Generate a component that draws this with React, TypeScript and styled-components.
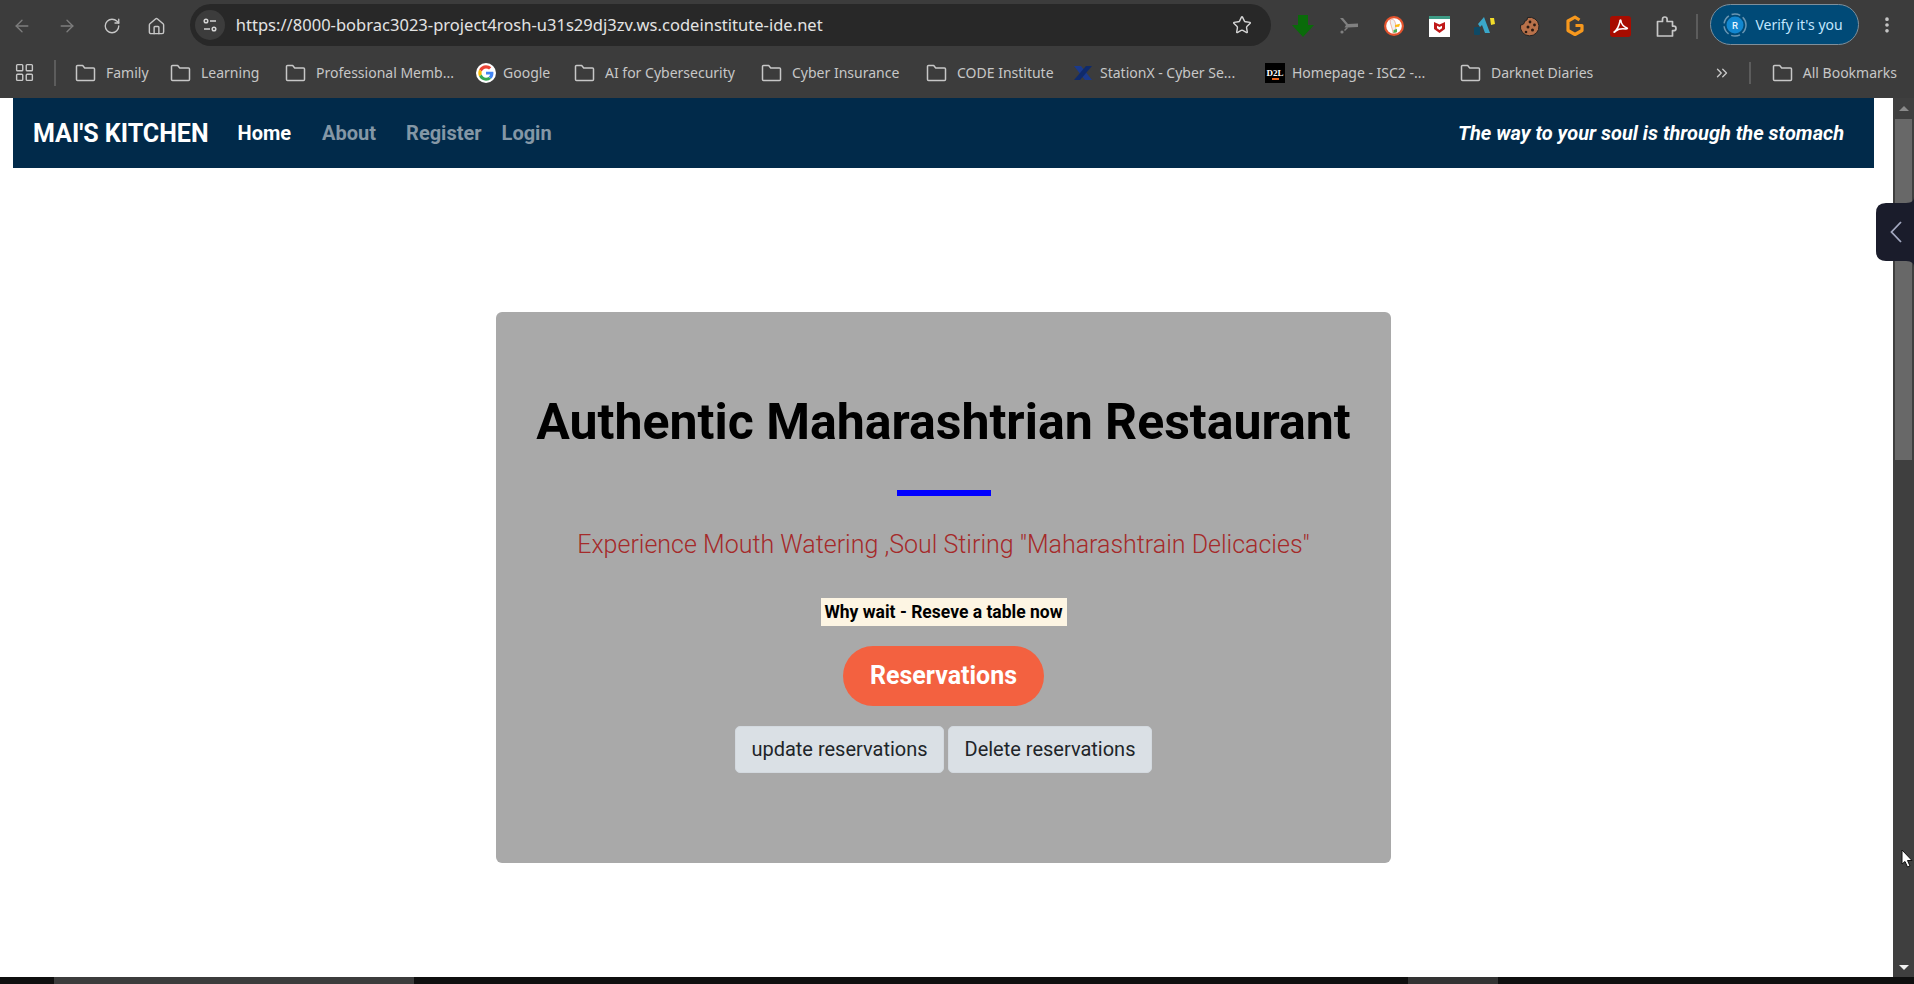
import React from "react";
import styled, { createGlobalStyle } from "styled-components";
import { ArrowLeft, ArrowRight, RotateCw, Home, Star, MoreVertical, LayoutGrid, ChevronsRight } from "lucide-react";

const Global = createGlobalStyle`
  html, body { margin: 0; padding: 0; height: 100%; overflow: hidden; background: #fff; }
  #root { height: 100%; }
  * { box-sizing: border-box; }
`;

const Screen = styled.div`
  position: relative;
  width: 1914px;
  height: 984px;
  display: flex;
  flex-direction: column;
  overflow: hidden;
  font-family: Roboto, "Liberation Sans", sans-serif;
`;

const Toolbar = styled.div`
  height: 49px;
  flex: none;
  background: #3c3c3c;
  display: flex;
  align-items: center;
  padding-top: 3px;
`;

const NavIcon = styled.div<{ $dim?: boolean }>`
  width: 44.7px;
  flex: none;
  display: flex;
  justify-content: center;
  color: ${(p) => (p.$dim ? "#7d7d7d" : "#c7c7c7")};
`;

const UrlPill = styled.div`
  width: 1081px;
  height: 42px;
  margin-left: 11px;
  margin-top: -3px;
  border-radius: 21px;
  background: #282828;
  display: flex;
  align-items: center;
  padding: 0 19px 0 5px;
  flex: none;
`;

const TuneChip = styled.div`
  width: 30px;
  height: 30px;
  border-radius: 50%;
  background: #3c3c3c;
  display: flex;
  align-items: center;
  justify-content: center;
  flex: none;
`;

const UrlText = styled.div`
  margin-left: 11px;
  flex: 1;
  font-family: "Noto Sans", sans-serif;
  font-size: 16.5px;
  letter-spacing: 0.02px;
  color: #e3e3e3;
  white-space: nowrap;
`;

const ExtRow = styled.div`
  display: flex;
  margin-left: 10px;
  flex: none;
`;

const ExtSlot = styled.div`
  width: 45.3px;
  height: 28px;
  display: flex;
  align-items: center;
  justify-content: center;
  color: #c7c7c7;
`;

const Divider = styled.div<{ $h: number; $ml: number; $mr?: number }>`
  width: 2px;
  height: ${(p) => p.$h}px;
  margin-left: ${(p) => p.$ml}px;
  margin-right: ${(p) => p.$mr ?? 0}px;
  background: #5c5c5c;
  flex: none;
`;

const VerifyPill = styled.div`
  width: 149px;
  height: 41px;
  margin-left: 12px;
  margin-top: -3px;
  border-radius: 21px;
  background: #004a77;
  border: 1px solid #7e8f9b;
  display: flex;
  align-items: center;
  padding-left: 12px;
  gap: 8px;
  flex: none;
  color: #c2e7ff;
  font-family: "Noto Sans", sans-serif;
  font-size: 14px;
  letter-spacing: 0;
  white-space: nowrap;
`;

const Dots = styled.div`
  width: 57px;
  display: flex;
  justify-content: center;
  color: #c7c7c7;
  margin-top: -2px;
`;

const BookmarkBar = styled.div`
  height: 49px;
  flex: none;
  background: #3c3c3c;
  display: flex;
  align-items: center;
  padding: 0 17px 2px 14px;
`;

const AppsIcon = styled.div`
  width: 22px;
  display: flex;
  color: #c7c7c7;
  flex: none;
`;

const BookmarkItem = styled.div<{ $w?: number; $gap?: number }>`
  width: ${(p) => (p.$w ? `${p.$w}px` : "auto")};
  flex: none;
  display: flex;
  align-items: center;
  gap: ${(p) => p.$gap ?? 10}px;
  color: #c7c7c7;
  font-family: "Noto Sans", sans-serif;
  font-size: 14px;
  white-space: nowrap;
`;

const BookmarkList = styled.div`
  display: flex;
  margin-left: 19px;
`;

const Overflow = styled.div`
  margin-left: auto;
  color: #c7c7c7;
  display: flex;
  margin-right: 18px;
`;

const Middle = styled.div`
  flex: 1;
  display: flex;
  min-height: 0;
`;

const Page = styled.div`
  flex: 1;
  background: #fff;
  padding: 0 19px 0 13px;
  display: flex;
  flex-direction: column;
`;

const Navbar = styled.nav`
  height: 70px;
  flex: none;
  background: #012a4a;
  display: flex;
  align-items: center;
  padding: 0 30px 0 20px;
`;

const Brand = styled.div`
  font-size: 25px;
  font-weight: 700;
  color: #fff;
  margin-right: 29px;
  white-space: nowrap;
`;

const NavLink = styled.div<{ $active?: boolean; $mr: number }>`
  font-size: 20px;
  font-weight: 700;
  color: ${(p) => (p.$active ? "#fff" : "#8497a6")};
  margin-right: ${(p) => p.$mr}px;
`;

const Tagline = styled.div`
  margin-left: auto;
  font-size: 20px;
  font-weight: 700;
  font-style: italic;
  color: #fff;
`;

const Card = styled.section`
  width: 895px;
  height: 551px;
  margin: 144px auto 0;
  background: #a9a9a9;
  border-radius: 6px;
  display: flex;
  flex-direction: column;
  align-items: center;
  padding-top: 82px;
`;

const Title = styled.h1`
  margin: 0;
  font-size: 50px;
  line-height: 56px;
  font-weight: 700;
  color: #000;
  white-space: nowrap;
`;

const Rule = styled.div`
  width: 94px;
  height: 6px;
  background: #0000ff;
  margin-top: 40px;
`;

const Lead = styled.p`
  margin: 31px 0 0;
  font-size: 25px;
  line-height: 36px;
  font-weight: 300;
  color: #a52a2a;
  white-space: nowrap;
`;

const Prompt = styled.div`
  margin-top: 35px;
  width: 246px;
  height: 28px;
  text-align: center;
  background: #fdf5e3;
  font-size: 17.5px;
  line-height: 28px;
  font-weight: 700;
  color: #000;
  white-space: nowrap;
`;

const PrimaryButton = styled.button`
  margin-top: 20px;
  width: 201px;
  height: 60px;
  border: none;
  border-radius: 30px;
  background: #f36140;
  color: #fff;
  font-family: inherit;
  font-size: 25px;
  font-weight: 700;
  padding: 0 0 2px;
`;

const ButtonRow = styled.div`
  margin-top: 20px;
  display: flex;
  gap: 4px;
`;

const LightButton = styled.button<{ $w: number }>`
  width: ${(p) => p.$w}px;
  height: 47px;
  border: 1px solid #d3d9df;
  border-radius: 5px;
  background: #dae0e5;
  color: #212529;
  font-family: inherit;
  font-size: 20px;
  font-weight: 400;
  padding: 0 0 2px;
  white-space: nowrap;
`;

const Scrollbar = styled.div`
  width: 21px;
  flex: none;
  background: #3f3f3f;
  display: flex;
  flex-direction: column;
  align-items: center;
  padding-top: 8px;
`;

const ArrowUp = styled.div`
  width: 0;
  height: 0;
  border-left: 5px solid transparent;
  border-right: 5px solid transparent;
  border-bottom: 5px solid #8a8a8a;
`;

const ArrowDown = styled.div`
  width: 0;
  height: 0;
  margin-top: auto;
  margin-bottom: 7px;
  border-left: 5px solid transparent;
  border-right: 5px solid transparent;
  border-top: 5px solid #f0f0f0;
`;

const Thumb = styled.div`
  width: 17px;
  height: 341px;
  margin-top: 8px;
  background: #686868;
`;

const BottomBar = styled.div`
  height: 7px;
  flex: none;
  background: #0f0f0f;
  display: flex;
`;

const BottomThumb = styled.div<{ $w: number; $ml: number; $c: string }>`
  width: ${(p) => p.$w}px;
  margin-left: ${(p) => p.$ml}px;
  background: ${(p) => p.$c};
`;

const PanelTab = styled.div`
  position: absolute;
  left: 1876px;
  top: 197px;
  width: 38px;
  height: 70px;
`;

const Cursor = styled.div`
  position: absolute;
  left: 1901px;
  top: 849px;
  width: 12px;
  height: 20px;
`;

const FolderIcon = () => (
  <svg width="21" height="18" viewBox="0 0 21 18" fill="none" stroke="currentColor" strokeWidth="1.500" strokeLinejoin="round">
    <path d="M1.500 2.500a1 1 0 0 1 1-1h5.200l2 2.500h8.800a1 1 0 0 1 1 1v10.500a1 1 0 0 1-1 1h-16a1 1 0 0 1-1-1z" />
  </svg>
);

const GoogleIcon = () => (
  <svg width="20" height="20" viewBox="0 0 48 48">
    <circle cx="24" cy="24" r="24" fill="#fff" />
    <path fill="#EA4335" d="M24 13c3 0 5.400 1 7.300 2.800l5.400-5.400C33.400 7.300 29.100 5.500 24 5.500c-7.300 0-13.500 4.100-16.500 10.200l6.300 4.900C15.200 16.200 19.200 13 24 13z" />
    <path fill="#4285F4" d="M41.800 24.400c0-1.300-.1-2.500-.3-3.700H24v7h10c-.4 2.300-1.700 4.200-3.700 5.500l6 4.600c3.500-3.200 5.500-8 5.500-13.400z" />
    <path fill="#FBBC05" d="M13.800 27.400c-.3-1-.5-2.200-.5-3.400s.2-2.300.5-3.400l-6.300-4.900C6.200 18.200 5.500 21 5.500 24s.7 5.800 2 8.300l6.300-4.900z" />
    <path fill="#34A853" d="M24 42.500c5 0 9.200-1.600 12.300-4.500l-6-4.600c-1.700 1.100-3.800 1.800-6.300 1.800-4.800 0-8.800-3.200-10.200-7.600l-6.300 4.900c3 6 9.200 10 16.500 10z" />
  </svg>
);

const StationXIcon = () => (
  <svg width="20" height="20" viewBox="0 0 20 20">
    <path d="M1 3 L8 3 L19 17 L12 17 Z" fill="#1b3a8c" />
    <path d="M19 3 L13 3 L1 17 L7 17 Z" fill="#0f2a6b" />
  </svg>
);

const D2LIcon = () => (
  <svg width="20" height="20" viewBox="0 0 20 20">
    <rect width="20" height="20" fill="#000" />
    <text x="10" y="13" textAnchor="middle" fontFamily="Liberation Serif, serif" fontSize="9" fontWeight="700" fill="#fff">D2L</text>
    <rect x="7" y="15" width="7" height="2" fill="#e8641b" />
  </svg>
);

const TuneIcon = () => (
  <svg width="18" height="18" viewBox="0 0 18 18" fill="none" stroke="#d5d5d5" strokeWidth="1.500">
    <circle cx="5" cy="5" r="1.800" />
    <path d="M9 5h6" />
    <circle cx="13" cy="13" r="1.800" />
    <path d="M3 13h6" />
  </svg>
);

const DownloadExt = () => (
  <svg width="22" height="24" viewBox="0 0 22 24"><path d="M6 1h10v10h6L11 23 0 11h6z" fill="#0a6b0a" /></svg>
);
const CutExt = () => (
  <svg width="18" height="18" viewBox="0 0 18 18" fill="#808080">
    <path d="M0 1l3 0 5 6 10-.5v3.500l-10 .5-3.500 0L6 8z" />
    <circle cx="2" cy="15" r="1.600" />
    <path d="M4 13l3-3 1 1-3 3z" />
  </svg>
);
const DuckExt = () => (
  <svg width="20" height="20" viewBox="0 0 20 20">
    <circle cx="10" cy="10" r="10" fill="#e5532d" />
    <circle cx="10" cy="10" r="7.800" fill="#fff" />
    <path d="M6 4c2.500-1.500 4-.5 5 2s.8 6 1 11H9C8.500 12 6 8 6 4z" fill="#f0f0f0" stroke="#e5532d" strokeWidth="0.400" />
    <path d="M11 9l5-1.200-.8 3-4.200.2z" fill="#fdb913" />
    <path d="M9.500 14l3.500-1v3l-3.500 1z" fill="#4caf50" />
  </svg>
);
const McAfeeExt = () => (
  <svg width="21" height="21" viewBox="0 0 21 21">
    <rect width="21" height="21" fill="#fff" />
    <rect width="21" height="3" fill="#3d9b85" />
    <path d="M5 6l5.500 2.500L16 6v7l-5.500 4L5 13z" fill="#c01818" />
    <path d="M8 9.800l2.500 1.200L13 9.800v2.500l-2.500 1.800L8 12.300z" fill="#fff" />
  </svg>
);
const NExt = () => (
  <svg width="22" height="20" viewBox="0 0 22 20">
    <rect x="0" y="11" width="6" height="8" rx="1" fill="#0e4a66" />
    <path d="M4 8l6-7 6 16h-5L8 9l-2 2z" fill="#3aa7c9" />
    <path d="M16 2l4 0 1 6-4 1z" fill="#f2dc2a" />
  </svg>
);
const CookieExt = () => (
  <svg width="21" height="21" viewBox="0 0 21 21">
    <path d="M8.500 1.500A9.300 9.300 0 1 1 1.500 9C4 9 5.800 7.500 5.500 5.200 7.300 5.200 8.600 3.600 8.500 1.500Z" fill="#b8714a" stroke="#222" strokeWidth="1" />
    <circle cx="11" cy="6" r="1.400" fill="#2a1a12" />
    <circle cx="15.500" cy="9" r="1.400" fill="#2a1a12" />
    <circle cx="9" cy="11" r="1.500" fill="#2a1a12" />
    <circle cx="13.500" cy="14" r="1.500" fill="#2a1a12" />
    <circle cx="7" cy="16" r="1.300" fill="#2a1a12" />
  </svg>
);
const GExt = () => (
  <svg width="20" height="22" viewBox="0 0 20 22" fill="none">
    <path d="M14.500 5L10 2.200 3 6v9.500l7 4 7-4v-5h-6.500" stroke="#f7981d" strokeWidth="3.200" strokeLinejoin="round" />
  </svg>
);
const PdfExt = () => (
  <svg width="21" height="21" viewBox="0 0 21 21" fill="none">
    <rect width="21" height="21" rx="3" fill="#a80c00" />
    <path d="M4 16c3-2 5-6 6-11 0-1.500 1-1 1 0 0 3 3 6 6 7 1 .5 0 1-1 1-4-.5-8 0-10 2-1 1-2 1.500-2 1z" stroke="#fff" strokeWidth="1.500" />
  </svg>
);
const ExtensionsIcon = () => (
  <svg width="22" height="23" viewBox="0 0 22 23" fill="none" stroke="currentColor" strokeWidth="1.700" strokeLinejoin="round">
    <path d="M2.500 6.500h5V4.300a2.300 2.300 0 0 1 4.600 0v2.200h5.400v4.600h1.200a2.300 2.300 0 0 1 0 4.600h-1.200v5.300h-15z" />
  </svg>
);

const RingAvatar = () => (
  <svg width="24" height="24" viewBox="0 0 24 24">
    <circle cx="12" cy="12" r="11" fill="none" stroke="#6a96b2" strokeWidth="1.500" strokeDasharray="9 3" />
    <circle cx="12" cy="12" r="8.500" fill="#1287d0" />
    <text x="12" y="15.500" textAnchor="middle" fontFamily="Roboto, sans-serif" fontSize="9.500" fontWeight="500" fill="#eaf6ff">R</text>
  </svg>
);

type Mark = "folder" | "google" | "stationx" | "d2l";

const bookmarks: { mark: Mark; label: string; w: number; gap?: number }[] = [
  { mark: "folder", label: "Family", w: 95 },
  { mark: "folder", label: "Learning", w: 115 },
  { mark: "folder", label: "Professional Memb...", w: 191 },
  { mark: "google", label: "Google", w: 98, gap: 7 },
  { mark: "folder", label: "AI for Cybersecurity", w: 187 },
  { mark: "folder", label: "Cyber Insurance", w: 165 },
  { mark: "folder", label: "CODE Institute", w: 147 },
  { mark: "stationx", label: "StationX - Cyber Se...", w: 192, gap: 7 },
  { mark: "d2l", label: "Homepage - ISC2 -...", w: 195, gap: 7 },
  { mark: "folder", label: "Darknet Diaries", w: 160 },
];

const markIcon = (m: Mark) => {
  if (m === "google") return <GoogleIcon />;
  if (m === "stationx") return <StationXIcon />;
  if (m === "d2l") return <D2LIcon />;
  return <FolderIcon />;
};

export default function App() {
  return (
    <Screen>
      <Global />
      <Toolbar>
        <NavIcon $dim><ArrowLeft size={20} strokeWidth={1.6} /></NavIcon>
        <NavIcon $dim><ArrowRight size={20} strokeWidth={1.6} /></NavIcon>
        <NavIcon><RotateCw size={18} strokeWidth={1.8} /></NavIcon>
        <NavIcon><Home size={19} strokeWidth={1.8} /></NavIcon>
        <UrlPill>
          <TuneChip><TuneIcon /></TuneChip>
          <UrlText>https://8000-bobrac3023-project4rosh-u31s29dj3zv.ws.codeinstitute-ide.net</UrlText>
          <Star size={20} strokeWidth={1.7} color="#d5d5d5" />
        </UrlPill>
        <ExtRow>
          <ExtSlot><DownloadExt /></ExtSlot>
          <ExtSlot><CutExt /></ExtSlot>
          <ExtSlot><DuckExt /></ExtSlot>
          <ExtSlot><McAfeeExt /></ExtSlot>
          <ExtSlot><NExt /></ExtSlot>
          <ExtSlot><CookieExt /></ExtSlot>
          <ExtSlot><GExt /></ExtSlot>
          <ExtSlot><PdfExt /></ExtSlot>
          <ExtSlot><ExtensionsIcon /></ExtSlot>
        </ExtRow>
        <Divider $h={25} $ml={8} />
        <VerifyPill><RingAvatar />Verify it's you</VerifyPill>
        <Dots><MoreVertical size={20} strokeWidth={2.4} /></Dots>
      </Toolbar>
      <BookmarkBar>
        <AppsIcon><LayoutGrid size={21} strokeWidth={1.6} /></AppsIcon>
        <Divider $h={26} $ml={18} />
        <BookmarkList>
          {bookmarks.map((b) => (
            <BookmarkItem key={b.label} $w={b.w} $gap={b.gap}>
              {markIcon(b.mark)}
              <span>{b.label}</span>
            </BookmarkItem>
          ))}
        </BookmarkList>
        <Overflow><ChevronsRight size={18} strokeWidth={1.8} /></Overflow>
        <Divider $h={22} $ml={0} $mr={21} />
        <BookmarkItem>
          <FolderIcon />
          <span>All Bookmarks</span>
        </BookmarkItem>
      </BookmarkBar>
      <Middle>
        <Page>
          <Navbar>
            <Brand>MAI'S KITCHEN</Brand>
            <NavLink $active $mr={31}>Home</NavLink>
            <NavLink $mr={30}>About</NavLink>
            <NavLink $mr={20}>Register</NavLink>
            <NavLink $mr={0}>Login</NavLink>
            <Tagline>The way to your soul is through the stomach</Tagline>
          </Navbar>
          <Card>
            <Title>Authentic Maharashtrian Restaurant</Title>
            <Rule />
            <Lead>Experience Mouth Watering ,Soul Stiring "Maharashtrain Delicacies"</Lead>
            <Prompt>Why wait - Reseve a table now</Prompt>
            <PrimaryButton>Reservations</PrimaryButton>
            <ButtonRow>
              <LightButton $w={209}>update reservations</LightButton>
              <LightButton $w={204}>Delete reservations</LightButton>
            </ButtonRow>
          </Card>
        </Page>
        <Scrollbar>
          <ArrowUp />
          <Thumb />
          <ArrowDown />
        </Scrollbar>
      </Middle>
      <BottomBar>
        <BottomThumb $w={360} $ml={54} $c="#3c3c3c" />
        <BottomThumb $w={90} $ml={994} $c="#333333" />
      </BottomBar>
      <PanelTab>
        <svg width="38" height="70" viewBox="0 0 38 70" fill="none">
          <path d="M38 0V70C38 65 34 64 28 64H10Q0 64 0 54V16Q0 6 10 6H28C34 6 38 5 38 0Z" fill="#1a1c2b" />
          <path d="M25 25L15.500 35L25 45" stroke="#a3a8c0" strokeWidth="1.800" />
        </svg>
      </PanelTab>
      <Cursor>
        <svg width="12" height="20" viewBox="0 0 12 20">
          <path d="M1 1V15L4 12.500L6.500 18L9 17L6.500 11.500H11Z" fill="#fff" stroke="#111" strokeWidth="1" />
        </svg>
      </Cursor>
    </Screen>
  );
}
